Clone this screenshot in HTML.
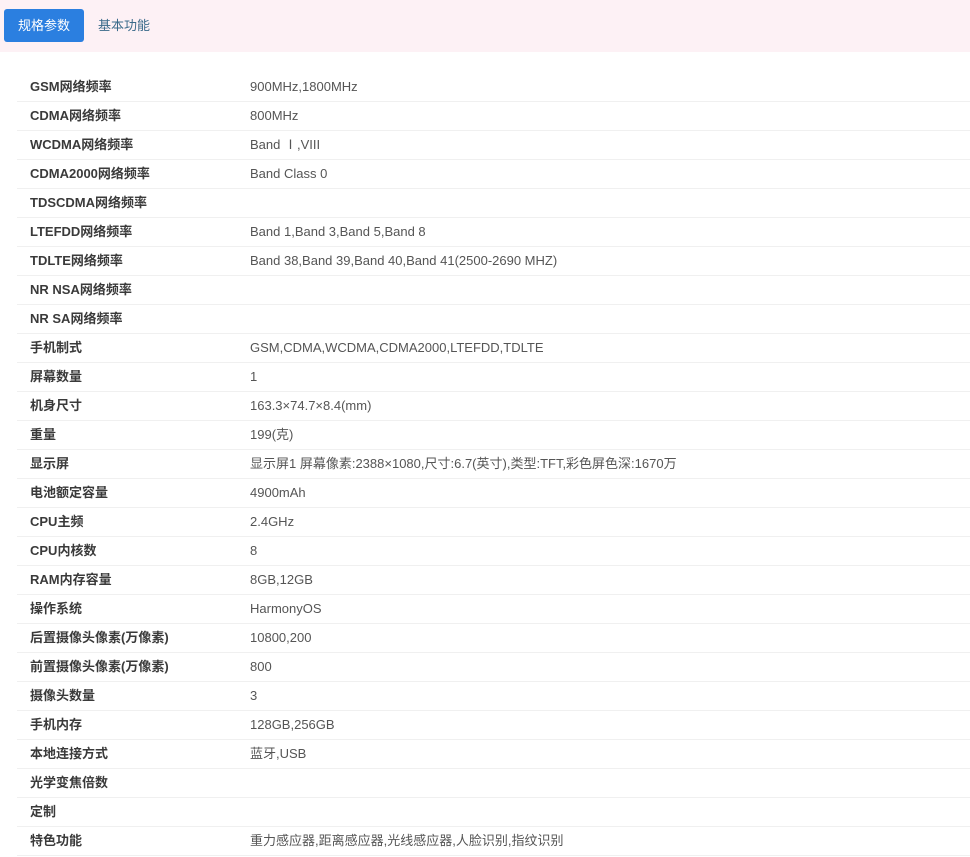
<!DOCTYPE html>
<html><head><meta charset="utf-8"><style>
body{margin:0;width:970px;height:857px;overflow:hidden;background:#fff;font-family:"Liberation Sans","Noto Sans CJK SC",sans-serif;}
.hd{height:52px;background:#fdf1f5;position:relative}
.btn{position:absolute;left:4px;top:9px;width:80px;height:33px;background:#2b7fe0;border-radius:3px;color:#fff;font-size:13px;line-height:33px;text-align:center}
.t2{position:absolute;left:98px;top:9px;line-height:33px;font-size:13px;color:#3a6a8a}
table{position:absolute;left:17px;top:73px;width:953px;border-collapse:collapse;font-size:13px}
td{height:28px;padding:0;border-bottom:1px solid #f0f0f0;vertical-align:middle;line-height:28px}
td.k{width:220px;padding-left:13px;color:#3a3a3a;font-weight:bold}
td.v{color:#555}
</style></head><body>
<div class="hd"><div class="btn">规格参数</div><div class="t2">基本功能</div></div>
<table>
<tr><td class="k">GSM网络频率</td><td class="v">900MHz,1800MHz</td></tr>
<tr><td class="k">CDMA网络频率</td><td class="v">800MHz</td></tr>
<tr><td class="k">WCDMA网络频率</td><td class="v">Band Ⅰ,VIII</td></tr>
<tr><td class="k">CDMA2000网络频率</td><td class="v">Band Class 0</td></tr>
<tr><td class="k">TDSCDMA网络频率</td><td class="v"></td></tr>
<tr><td class="k">LTEFDD网络频率</td><td class="v">Band 1,Band 3,Band 5,Band 8</td></tr>
<tr><td class="k">TDLTE网络频率</td><td class="v">Band 38,Band 39,Band 40,Band 41(2500-2690 MHZ)</td></tr>
<tr><td class="k">NR NSA网络频率</td><td class="v"></td></tr>
<tr><td class="k">NR SA网络频率</td><td class="v"></td></tr>
<tr><td class="k">手机制式</td><td class="v">GSM,CDMA,WCDMA,CDMA2000,LTEFDD,TDLTE</td></tr>
<tr><td class="k">屏幕数量</td><td class="v">1</td></tr>
<tr><td class="k">机身尺寸</td><td class="v">163.3×74.7×8.4(mm)</td></tr>
<tr><td class="k">重量</td><td class="v">199(克)</td></tr>
<tr><td class="k">显示屏</td><td class="v">显示屏1 屏幕像素:2388×1080,尺寸:6.7(英寸),类型:TFT,彩色屏色深:1670万</td></tr>
<tr><td class="k">电池额定容量</td><td class="v">4900mAh</td></tr>
<tr><td class="k">CPU主频</td><td class="v">2.4GHz</td></tr>
<tr><td class="k">CPU内核数</td><td class="v">8</td></tr>
<tr><td class="k">RAM内存容量</td><td class="v">8GB,12GB</td></tr>
<tr><td class="k">操作系统</td><td class="v">HarmonyOS</td></tr>
<tr><td class="k">后置摄像头像素(万像素)</td><td class="v">10800,200</td></tr>
<tr><td class="k">前置摄像头像素(万像素)</td><td class="v">800</td></tr>
<tr><td class="k">摄像头数量</td><td class="v">3</td></tr>
<tr><td class="k">手机内存</td><td class="v">128GB,256GB</td></tr>
<tr><td class="k">本地连接方式</td><td class="v">蓝牙,USB</td></tr>
<tr><td class="k">光学变焦倍数</td><td class="v"></td></tr>
<tr><td class="k">定制</td><td class="v"></td></tr>
<tr><td class="k">特色功能</td><td class="v">重力感应器,距离感应器,光线感应器,人脸识别,指纹识别</td></tr>
</table>
</body></html>
